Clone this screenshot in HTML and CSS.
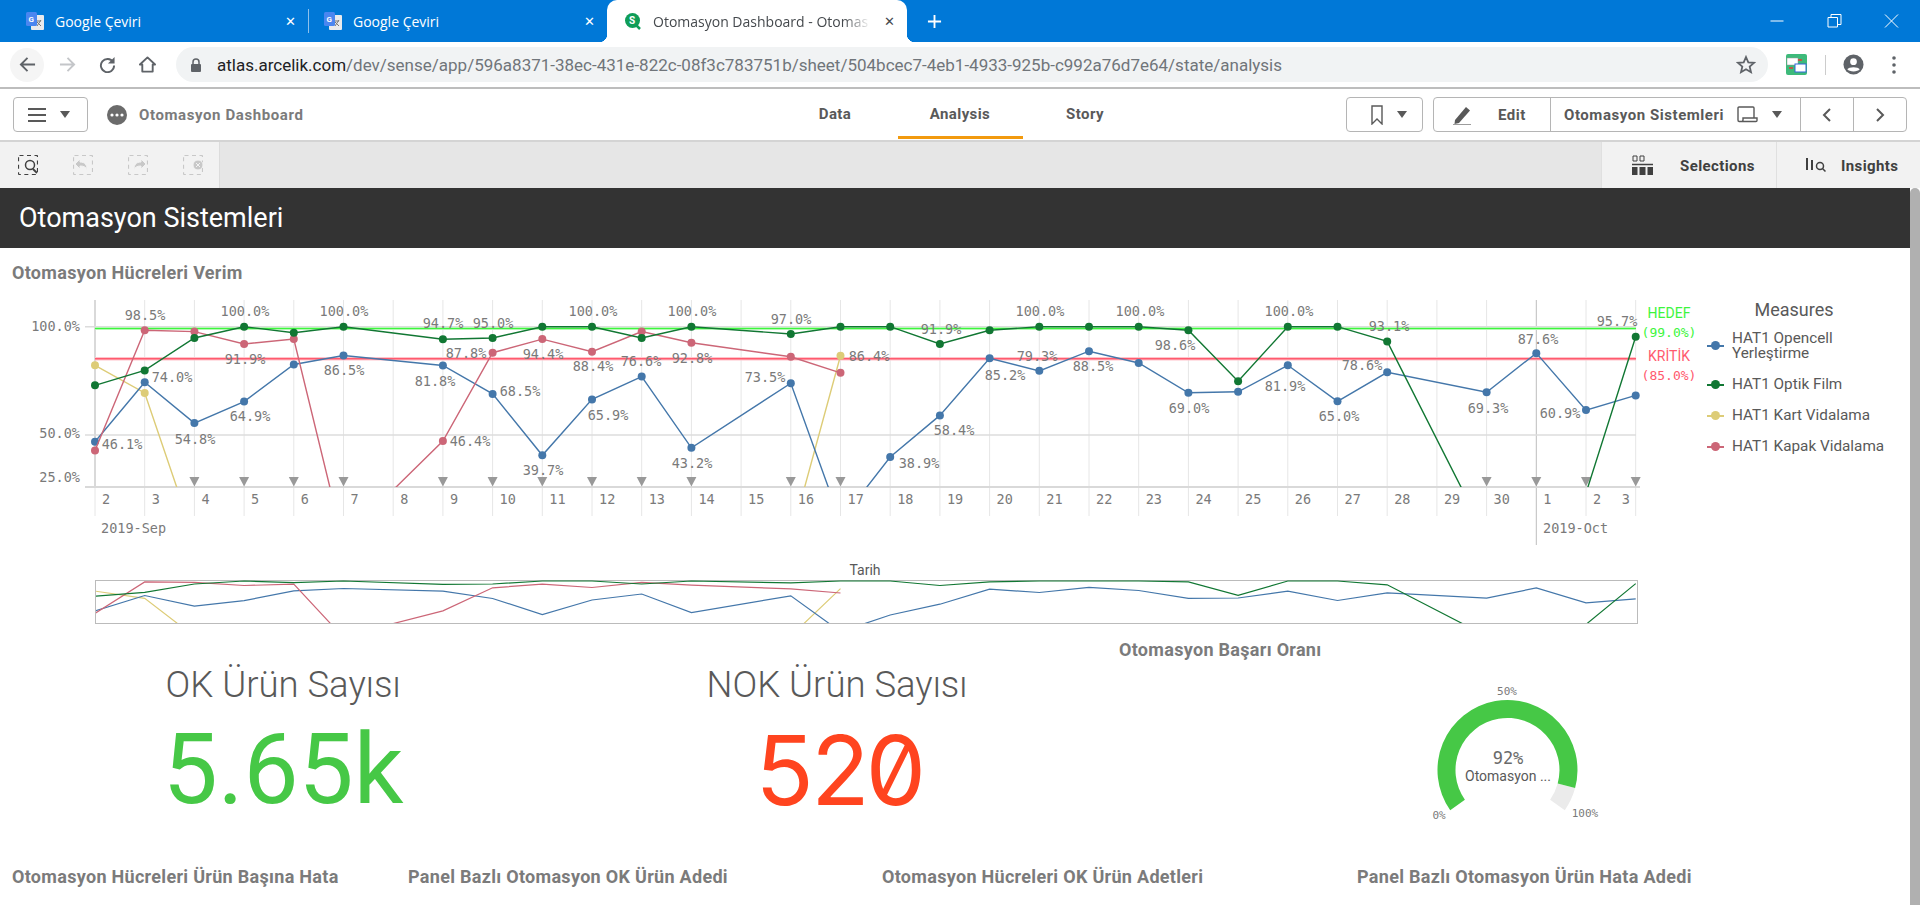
FILE: index.html
```html
<!DOCTYPE html>
<html lang="en">
<head>
    <meta charset="UTF-8">
    <title>Otomasyon Dashboard - Otomasyon Sistemleri</title>
    <link rel="stylesheet" href="styles.css">
</head>
<body>
    <!-- browser chrome -->
    <div class="tab-strip">
        <div class="tab">
            <svg class="favicon" viewBox="0 0 18 18"><rect x="5" y="3" width="13" height="15" rx="1" fill="#e8eaed"/><path d="M10 9l5 5M15 8l-4 6M10 9h5" stroke="#777" fill="none"/><rect x="0" y="0" width="11" height="14" rx="1.5" fill="#4a86f0"/><text x="2.5" y="9.5" class="favicon-g">G</text></svg>
            <span class="tab-title">Google Çeviri</span>
            <span class="tab-close">✕</span>
        </div>
        <div class="tab tab-sep">
            <svg class="favicon" viewBox="0 0 18 18"><rect x="5" y="3" width="13" height="15" rx="1" fill="#e8eaed"/><path d="M10 9l5 5M15 8l-4 6M10 9h5" stroke="#777" fill="none"/><rect x="0" y="0" width="11" height="14" rx="1.5" fill="#4a86f0"/><text x="2.5" y="9.5" class="favicon-g">G</text></svg>
            <span class="tab-title">Google Çeviri</span>
            <span class="tab-close">✕</span>
        </div>
        <div class="tab tab-active">
            <svg class="favicon" viewBox="0 0 18 18"><circle cx="8.5" cy="8.5" r="7.5" fill="#0f9d58"/><path d="M12 13l4 4" stroke="#0f9d58" stroke-width="2.5"/><text x="5" y="12" class="favicon-s">S</text></svg>
            <span class="tab-title tab-fade">Otomasyon Dashboard - Otomas</span>
            <span class="tab-close">✕</span>
        </div>
        <svg class="new-tab" viewBox="0 0 16 16"><path d="M8 1v14M1 8h14" stroke="#fff" stroke-width="2"/></svg>
        <div class="window-controls">
            <svg viewBox="0 0 14 14"><path d="M0 7h13" stroke="#fff"/></svg>
            <svg viewBox="0 0 14 14"><path d="M.5 3.500h9.500v9.500H.5zM3.500 3.500V.5h10v10H10" stroke="#fff" fill="none"/></svg>
            <svg viewBox="0 0 14 14"><path d="M.5.5l13 13M13.500.5l-13 13" stroke="#fff" fill="none"/></svg>
        </div>
    </div>

    <div class="address-row">
        <div class="nav-button nav-hover">
            <svg viewBox="0 0 18 18"><path d="M17 9H2M9 2L2 9l7 7" stroke="#5f6368" stroke-width="2" fill="none"/></svg>
        </div>
        <div class="nav-button">
            <svg viewBox="0 0 18 18"><path d="M1 9h15M9 2l7 7-7 7" stroke="#c4c6c9" stroke-width="2" fill="none"/></svg>
        </div>
        <div class="nav-button">
            <svg viewBox="0 0 18 18"><path d="M15 6.500A7 7 0 1 0 16 10" stroke="#5f6368" stroke-width="2" fill="none"/><path d="M16.500 1v7h-7z" fill="#5f6368"/></svg>
        </div>
        <div class="nav-button">
            <svg viewBox="0 0 18 18"><path d="M9 1.500L1 9h2.500v7.500h11V9H17z" stroke="#5f6368" stroke-width="2" fill="none" stroke-linejoin="round"/></svg>
        </div>
        <div class="omnibox">
            <svg class="lock" viewBox="0 0 12 14"><path d="M3 6V4a3 3 0 0 1 6 0v2" stroke="#5f6368" stroke-width="1.500" fill="none"/><rect x="1" y="6" width="10" height="8" rx="1" fill="#5f6368"/></svg>
            <span class="url"><b>atlas.arcelik.com</b>/dev/sense/app/596a8371-38ec-431e-822c-08f3c783751b/sheet/504bcec7-4eb1-4933-925b-c992a76d7e64/state/analysis</span>
            <svg class="star" viewBox="0 0 20 20"><path d="M10 2l2.300 5.300 5.700.5-4.300 3.800 1.300 5.600L10 14.200 5 17.200l1.300-5.600L2 7.800l5.700-.5z" stroke="#5f6368" stroke-width="1.800" fill="none"/></svg>
        </div>
        <svg class="extension" viewBox="0 0 21 21"><rect width="21" height="21" rx="2" fill="#3dba7a"/><rect x="1" y="4" width="11" height="7" fill="#fff" stroke="#999" stroke-width=".5"/><rect x="9" y="10" width="11" height="8" fill="#fff" stroke="#3367d6"/><path d="M12 6h4M3 14h4" stroke="#e53935" stroke-width="1.500"/></svg>
        <span class="toolbar-sep"></span>
        <svg class="account" viewBox="0 0 22 22"><circle cx="11" cy="11" r="10.500" fill="#5f6368"/><circle cx="11" cy="8" r="3.500" fill="#fff"/><path d="M4.500 16c1.500-3 11.500-3 13 0-2 3-11 3-13 0z" fill="#fff"/></svg>
        <svg class="kebab" viewBox="0 0 4 18"><circle cx="2" cy="2" r="1.800" fill="#5f6368"/><circle cx="2" cy="9" r="1.800" fill="#5f6368"/><circle cx="2" cy="16" r="1.800" fill="#5f6368"/></svg>
    </div>

    <!-- qlik toolbar -->
    <div class="app-bar">
        <div class="app-left">
            <div class="btn menu-btn">
                <svg class="hamburger" viewBox="0 0 18 16"><path d="M0 2h18M0 8h18M0 14h18" stroke="#595959" stroke-width="2.200"/></svg>
                <span class="caret"></span>
            </div>
            <svg class="app-dots" viewBox="0 0 20 20"><circle cx="10" cy="10" r="10" fill="#6b6b6b"/><circle cx="5" cy="10" r="1.600" fill="#fff"/><circle cx="10" cy="10" r="1.600" fill="#fff"/><circle cx="15" cy="10" r="1.600" fill="#fff"/></svg>
            <span class="app-title">Otomasyon Dashboard</span>
        </div>
        <div class="app-tabs">
            <span class="app-tab">Data</span>
            <span class="app-tab app-tab-active">Analysis</span>
            <span class="app-tab">Story</span>
        </div>
        <div class="app-right">
            <div class="btn bookmark-btn">
                <svg class="bookmark" viewBox="0 0 12 20"><path d="M1 1h10v18l-5-5-5 5z" stroke="#595959" stroke-width="1.400" fill="none"/></svg>
                <span class="caret"></span>
            </div>
            <div class="btn-group">
                <div class="group-item edit-item">
                    <svg class="pencil" viewBox="0 0 20 20"><path d="M3 15L14 2l4 3.500L7 18l-4.500 1z" fill="#595959"/><path d="M1 20h18" stroke="#595959" stroke-width="1.200"/></svg>
                    <span>Edit</span>
                </div>
                <div class="group-item sheet-item">
                    <span>Otomasyon Sistemleri</span>
                    <svg class="sheet-icon" viewBox="0 0 21 17"><path d="M2 15.500a1.500 1.500 0 0 1-1-1.500V2a1 1 0 0 1 1-1h14a1 1 0 0 1 1 1v10M2 15.500h17a1 1 0 0 0 1-1V12H6v2a1.500 1.500 0 0 1-1.500 1.500" stroke="#595959" stroke-width="1.400" fill="none"/></svg>
                    <span class="caret"></span>
                </div>
                <div class="group-item arrow-item">
                    <svg viewBox="0 0 10 16"><path d="M8 2L2 8l6 6" stroke="#595959" stroke-width="2" fill="none"/></svg>
                </div>
                <div class="group-item arrow-item">
                    <svg viewBox="0 0 10 16"><path d="M2 2l6 6-6 6" stroke="#595959" stroke-width="2" fill="none"/></svg>
                </div>
            </div>
        </div>
    </div>

    <div class="sub-bar">
        <div class="selection-tools">
            <svg viewBox="0 0 20 20"><rect x=".5" y=".5" width="19" height="19" rx="1" class="dash dash-on"/><circle cx="12" cy="10" r="4.500" fill="#f2f2f2" stroke="#404040" stroke-width="1.500"/><path d="M15 14l4 4" stroke="#404040" stroke-width="1.800"/></svg>
            <svg viewBox="0 0 20 20"><rect x=".5" y=".5" width="19" height="19" rx="1" class="dash"/><path d="M2 9l5-5v3c5 0 7 3 7 8-1-3-3-4-7-4v3z" fill="#c8c8c8" stroke="#f2f2f2"/></svg>
            <svg viewBox="0 0 20 20"><rect x=".5" y=".5" width="19" height="19" rx="1" class="dash"/><path d="M18 9l-5-5v3c-5 0-7 3-7 8 1-3 3-4 7-4v3z" fill="#c8c8c8" stroke="#f2f2f2"/></svg>
            <svg viewBox="0 0 20 20"><rect x=".5" y=".5" width="19" height="19" rx="1" class="dash"/><circle cx="15" cy="10" r="5" fill="#c8c8c8" stroke="#f2f2f2"/><path d="M13 8l4 4M17 8l-4 4" stroke="#f2f2f2"/></svg>
        </div>
        <div class="side-tools">
            <div class="side-tool selections-tool">
                <svg viewBox="0 0 21 20"><path d="M1 1h4v5H1zM8 1h4v5H8z" stroke="#404040" fill="none"/><path d="M0 9.500h21" stroke="#404040" stroke-width="1.500"/><path d="M0 12h5.500v8H0zM7.500 12h6v8h-6zM15.500 12H21v8h-5.500z" fill="#404040"/></svg>
                <span>Selections</span>
            </div>
            <div class="side-tool insights-tool">
                <svg viewBox="0 0 21 16"><path d="M1 1v12M6 3v10" stroke="#404040" stroke-width="2"/><circle cx="14" cy="9" r="3.500" stroke="#404040" stroke-width="1.500" fill="none"/><path d="M16.500 11.500l3 3" stroke="#404040" stroke-width="1.500"/></svg>
                <span>Insights</span>
            </div>
        </div>
    </div>

    <div class="sheet-wrap">
        <main class="sheet">
            <h1 class="sheet-title">Otomasyon Sistemleri</h1>

            <h2 class="object-title verim-title">Otomasyon Hücreleri Verim</h2>
            <div class="chart-row">
                <svg id="lineChart" class="line-chart" viewBox="0 290 1700 350"></svg>
                <div class="legend">
                    <div class="legend-head">Measures</div>
                    <div class="legend-item"><span class="marker marker-blue"></span><span>HAT1 Opencell<br>Yerleştirme</span></div>
                    <div class="legend-item"><span class="marker marker-green"></span><span>HAT1 Optik Film</span></div>
                    <div class="legend-item"><span class="marker marker-yellow"></span><span>HAT1 Kart Vidalama</span></div>
                    <div class="legend-item"><span class="marker marker-pink"></span><span>HAT1 Kapak Vidalama</span></div>
                </div>
            </div>

            <div class="kpi-row">
                <div class="kpi kpi-ok">
                    <div class="kpi-label">OK Ürün Sayısı</div>
                    <div class="kpi-value value-ok">5.65k</div>
                </div>
                <div class="kpi kpi-nok">
                    <div class="kpi-label">NOK Ürün Sayısı</div>
                    <div class="kpi-value value-nok">520</div>
                </div>
                <div class="gauge-box">
                    <h2 class="object-title gauge-title">Otomasyon Başarı Oranı</h2>
                    <svg id="gauge" class="gauge" viewBox="1108 670 802 170"></svg>
                </div>
            </div>

            <div class="bottom-titles">
                <h2 class="object-title">Otomasyon Hücreleri Ürün Başına Hata</h2>
                <h2 class="object-title">Panel Bazlı Otomasyon OK Ürün Adedi</h2>
                <h2 class="object-title">Otomasyon Hücreleri OK Ürün Adetleri</h2>
                <h2 class="object-title">Panel Bazlı Otomasyon Ürün Hata Adedi</h2>
            </div>
        </main>
        <div class="scrollbar"></div>
    </div>

    <script src="chart.js"></script>
</body>
</html>
```

FILE: styles.css
```css
:root {
    --chrome-blue: #0078d7;
    --qlik-text: #595959;
    --title-grey: #7b7b7b;
    --border: #b5b5b5;
    --ok-green: #46c846;
    --nok-red: #ff441f;
}

* {
    box-sizing: border-box;
}

html, body {
    height: 905px;
    margin: 0;
    overflow: hidden;
}

body {
    font-family: Roboto, sans-serif;
    background: #fff;
    color: var(--qlik-text);
}

/* browser chrome */
.tab-strip {
    display: flex;
    align-items: center;
    height: 42px;
    padding-left: 8px;
    background: var(--chrome-blue);
}

.tab {
    display: flex;
    align-items: center;
    width: 300px;
    height: 42px;
    padding: 0 12px 0 18px;
    color: #fff;
    font-family: "Open Sans", sans-serif;
    font-size: 14px;
}

.tab-sep {
    width: 299px;
    padding-left: 16px;
    background: linear-gradient(#8dc1ec, #8dc1ec) left center / 1px 24px no-repeat;
}

.tab-active {
    position: relative;
    height: 42px;
    background: #fff;
    color: #45494d;
    border-radius: 10px 10px 0 0;
    padding-left: 17px;
}

.tab-active::before, .tab-active::after {
    content: "";
    position: absolute;
    bottom: 0;
    width: 8px;
    height: 8px;
}

.tab-active::before {
    left: -8px;
    background: radial-gradient(circle at 0 0, var(--chrome-blue) 8px, #fff 8.500px);
}

.tab-active::after {
    right: -8px;
    background: radial-gradient(circle at 100% 0, var(--chrome-blue) 8px, #fff 8.500px);
}

.favicon {
    width: 18px;
    height: 18px;
    flex: none;
    margin-right: 11px;
}

.favicon-g {
    font: bold 8px Roboto, sans-serif;
    fill: #fff;
}

.favicon-s {
    font: bold 10px Roboto, sans-serif;
    fill: #fff;
}

.tab-title {
    flex: 1;
    white-space: nowrap;
}

.tab-fade {
    -webkit-mask-image: linear-gradient(to right, #000 190px, transparent 218px);
}

.tab-close {
    flex: none;
    width: 12px;
    font-size: 13px;
    text-align: center;
}

.new-tab {
    width: 15px;
    height: 15px;
    margin-left: 20px;
}

.window-controls {
    display: flex;
    margin-left: auto;
}

.window-controls svg {
    width: 57px;
    height: 14px;
}

.address-row {
    display: flex;
    align-items: center;
    height: 47px;
    padding-left: 10px;
    border-bottom: 2px solid #bdbdbd;
}

.nav-button {
    display: flex;
    align-items: center;
    justify-content: center;
    width: 34px;
    height: 34px;
    margin-right: 6px;
    border-radius: 50%;
}

.nav-button svg {
    width: 17px;
    height: 17px;
}

.nav-hover {
    background: #f5f5f5;
}

.omnibox {
    display: flex;
    align-items: center;
    width: 1592px;
    height: 35px;
    margin-left: 6px;
    padding-left: 14px;
    background: #f1f3f4;
    border-radius: 18px;
}

.lock {
    width: 12px;
    height: 14px;
    margin-right: 15px;
}

.url {
    flex: 1;
    font-size: 17px;
    color: #70757a;
    white-space: nowrap;
}

.url b {
    font-weight: 400;
    color: #202124;
}

.star {
    width: 20px;
    height: 20px;
    margin-right: 12px;
}

.extension {
    width: 21px;
    height: 21px;
    margin-left: 18px;
}

.toolbar-sep {
    width: 1px;
    height: 20px;
    margin: 0 17px 0 18px;
    background: #ccc;
}

.account {
    width: 21px;
    height: 21px;
}

.kebab {
    width: 4px;
    height: 18px;
    margin-left: 28px;
}

/* qlik toolbar */
.app-bar {
    display: grid;
    grid-template-columns: 1fr auto 1fr;
    height: 53px;
    border-bottom: 2px solid #d4d4d4;
}

.app-left, .app-right {
    display: flex;
    align-items: center;
}

.app-left {
    padding-left: 13px;
}

.app-right {
    justify-content: flex-end;
    padding-right: 13px;
}

.btn, .btn-group {
    display: flex;
    align-items: center;
    height: 35px;
    background: #fff;
    border: 1px solid var(--border);
    border-radius: 4px;
}

.menu-btn {
    width: 75px;
    padding-left: 14px;
}

.hamburger {
    width: 18px;
    height: 16px;
    margin-right: 14px;
}

.caret {
    width: 0;
    height: 0;
    border-left: 5.500px solid transparent;
    border-right: 5.500px solid transparent;
    border-top: 7px solid var(--qlik-text);
}

.app-dots {
    width: 20px;
    height: 20px;
    margin-left: 19px;
}

.app-title {
    margin-left: 12px;
    color: var(--title-grey);
    font-size: 15px;
    font-weight: 700;
    letter-spacing: .6px;
}

.app-tabs {
    display: flex;
}

.app-tab {
    width: 125px;
    height: 50px;
    padding-top: 16px;
    text-align: center;
    font-size: 15px;
    font-weight: 700;
    letter-spacing: .4px;
}

.app-tab-active {
    border-bottom: 3px solid #f29a0e;
}

.bookmark-btn {
    width: 77px;
    margin-right: 10px;
    padding-left: 24px;
}

.bookmark {
    width: 12px;
    height: 20px;
    margin-right: 14px;
}

.btn-group {
    width: 474px;
}

.group-item {
    display: flex;
    align-items: center;
    height: 100%;
    font-size: 15px;
    font-weight: 700;
    letter-spacing: .55px;
    border-left: 1px solid var(--border);
}

.group-item:first-child {
    border-left: 0;
}

.edit-item {
    width: 116px;
    padding-left: 18px;
}

.pencil {
    width: 20px;
    height: 20px;
    margin-right: 26px;
}

.sheet-item {
    width: 250px;
    padding-left: 13px;
}

.sheet-icon {
    width: 21px;
    height: 17px;
    margin: 0 14px 0 13px;
}

.arrow-item {
    flex: 1;
    justify-content: center;
}

.arrow-item svg {
    width: 10px;
    height: 16px;
}

.sub-bar {
    display: flex;
    justify-content: space-between;
    height: 46px;
    background: #e6e6e6;
}

.selection-tools {
    display: flex;
    align-items: center;
    gap: 35px;
    width: 220px;
    padding-left: 18px;
    background: #f2f2f2;
    border-right: 1px solid #dcdcdc;
}

.selection-tools svg {
    width: 20px;
    height: 20px;
}

.dash {
    fill: none;
    stroke: #c8c8c8;
    stroke-width: 1.200;
    stroke-dasharray: 4 3.500;
}

.dash-on {
    stroke: #404040;
}

.side-tools {
    display: flex;
}

.side-tool {
    display: flex;
    align-items: center;
    background: #f2f2f2;
    border-left: 1px solid #e0e0e0;
    color: #404040;
    font-size: 15px;
    font-weight: 700;
    letter-spacing: .4px;
}

.side-tool span {
    padding-top: 2px;
}

.selections-tool {
    width: 175px;
    padding-left: 30px;
}

.selections-tool svg {
    width: 21px;
    height: 20px;
    margin-right: 27px;
}

.insights-tool {
    width: 144px;
    padding-left: 29px;
}

.insights-tool svg {
    width: 21px;
    height: 16px;
    margin-right: 14px;
}

/* sheet */
.sheet-wrap {
    display: flex;
    height: 717px;
}

.sheet {
    width: 1910px;
    overflow: hidden;
}

.scrollbar {
    width: 10px;
    background: #b0b0b0;
    border-radius: 5px 5px 0 0;
}

.sheet-title {
    height: 60px;
    margin: 0;
    padding: 0 19px;
    background: #333;
    color: #fff;
    font-size: 27px;
    font-weight: 400;
    line-height: 60px;
}

.object-title {
    margin: 0;
    color: var(--title-grey);
    font-size: 18px;
    font-weight: 700;
    letter-spacing: .3px;
    line-height: 20px;
    white-space: nowrap;
}

.verim-title {
    height: 42px;
    padding: 15px 0 0 12px;
}

.chart-row {
    display: flex;
    height: 350px;
}

.line-chart {
    width: 1700px;
    height: 350px;
    flex: none;
}

.axis-text {
    font-family: "DejaVu Sans Mono", monospace;
    font-size: 13.500px;
    fill: #7a7a7a;
}

.side-label {
    font-size: 13px;
}

.small-text {
    font-family: "DejaVu Sans Mono", monospace;
    font-size: 11px;
    fill: #7a7a7a;
}

.tarih {
    font-family: Roboto, sans-serif;
    font-size: 14px;
    fill: #595959;
}

.legend {
    width: 188px;
    padding-top: 8px;
    font-size: 15.300px;
    line-height: 15px;
}

.legend-head {
    margin-bottom: 9px;
    color: #595959;
    font-size: 18px;
    line-height: 24px;
    text-align: center;
}

.legend-item {
    display: flex;
    align-items: center;
    gap: 8px;
    margin-bottom: 16px;
    padding-left: 7px;
    white-space: nowrap;
}

.marker {
    position: relative;
    flex: none;
    width: 17px;
    height: 2px;
    background: currentColor;
}

.marker::after {
    content: "";
    position: absolute;
    left: 4px;
    top: -4px;
    width: 9px;
    height: 9px;
    border-radius: 50%;
    background: currentColor;
}

.marker-blue { color: #4477aa; }
.marker-green { color: #117733; }
.marker-yellow { color: #ddcc77; }
.marker-pink { color: #cc6677; }

.kpi-row {
    display: grid;
    grid-template-columns: 566px 542px 1fr;
    height: 224px;
}

.kpi {
    padding-top: 25px;
    text-align: center;
}

.kpi-label {
    font-size: 36.500px;
    font-weight: 300;
    line-height: 40px;
    color: #595959;
}

.kpi-value {
    margin-top: 16px;
    font-size: 98px;
    line-height: 98px;
}

.value-ok {
    color: var(--ok-green);
}

.value-nok {
    color: var(--nok-red);
    font-family: Inter, sans-serif;
    font-size: 96px;
    font-weight: 400;
    letter-spacing: -7px;
    font-variant-numeric: slashed-zero tabular-nums;
}

.gauge-title {
    padding-left: 11px;
}

.gauge {
    display: block;
    width: 802px;
    height: 170px;
    margin-top: 10px;
}

.gauge-big {
    font-family: "DejaVu Sans Mono", monospace;
    font-size: 17px;
    fill: #6a6a6a;
    text-anchor: middle;
}

.gauge-sub {
    font-size: 14px;
    fill: #595959;
    text-anchor: middle;
}

.bottom-titles {
    display: grid;
    grid-template-columns: 396px 474px 475px 1fr;
    padding: 3px 0 0 12px;
}
```

FILE: chart.js
```js
const SVG_NS = 'http://www.w3.org/2000/svg';

// x of each day, first point is 2 Sep
const X0 = 95;
const STEP = 49.7;
const xAt = i => X0 + STEP * i;
const yAt = v => 326.7 + (100 - v) * 2.133;
const miniY = v => 581 + (100 - v) * 0.557;

const n = null;
const series = [
    { color: '#ddcc77', values: [81.9, 68.9, 0.4, n, n, n, n, n, n, n, n, n, n, n, 1, 86.4] },
    { color: '#4477aa', values: [46.1, 74, 54.8, 64.9, 82.3, 86.5, n, 81.8, 68.5, 39.7, 65.9, 76.6, 43.2, n, 73.5, 8.9, 38.9, 58.4, 85.2, 79.3, 88.5, 83, 69, 69.5, 81.9, 65, 78.6, n, 69.3, 87.6, 60.9, 67.8] },
    { color: '#cc6677', values: [42, 98.3, 97.7, 91.9, 94.2, -1.4, 23.5, 46.4, 87.8, 94.2, 88.3, 97.7, 92.5, n, 85.9, 78.4] },
    { color: '#117733', values: [72.5, 79.5, 94.7, 100, 97.2, 100, n, 94.1, 94.7, 100, 100, 94.7, 100, n, 96.6, 100, 100, 91.9, 98.3, 100, 100, 100, 98.3, 74.4, 100, 100, 93.1, n, n, -44.8, 22, 95.3] }
];

const pointLabels = [
    ['98.5%', 145, 315], ['100.0%', 245, 311], ['100.0%', 344, 311], ['74.0%', 172, 377],
    ['46.1%', 122, 444], ['54.8%', 195, 439], ['64.9%', 250, 416], ['91.9%', 245, 359],
    ['86.5%', 344, 370], ['81.8%', 435, 381], ['94.7%', 443, 323], ['95.0%', 493, 323],
    ['87.8%', 466, 353], ['68.5%', 520, 391], ['46.4%', 470, 441], ['94.4%', 543, 354],
    ['39.7%', 543, 470], ['88.4%', 593, 366], ['65.9%', 608, 415], ['100.0%', 593, 311],
    ['76.6%', 641, 361], ['100.0%', 692, 311], ['92.8%', 692, 358], ['43.2%', 692, 463],
    ['97.0%', 791, 319], ['73.5%', 765, 377], ['86.4%', 869, 356], ['38.9%', 919, 463],
    ['91.9%', 941, 329], ['58.4%', 954, 430], ['79.3%', 1037, 356], ['85.2%', 1005, 375],
    ['88.5%', 1093, 366], ['100.0%', 1040, 311], ['100.0%', 1140, 311], ['98.6%', 1175, 345],
    ['69.0%', 1189, 408], ['100.0%', 1289, 311], ['81.9%', 1285, 386], ['65.0%', 1339, 416],
    ['78.6%', 1362, 365], ['93.1%', 1389, 326], ['69.3%', 1488, 408], ['87.6%', 1538, 339],
    ['60.9%', 1560, 413], ['95.7%', 1617, 321]
];

const markedDays = [2, 3, 4, 5, 7, 8, 9, 10, 11, 12, 14, 15, 28, 29, 30, 31];
const dayNames = [2, 3, 4, 5, 6, 7, 8, 9, 10, 11, 12, 13, 14, 15, 16, 17, 18, 19, 20, 21, 22, 23, 24, 25, 26, 27, 28, 29, 30, 1, 2, 3];

function el(parent, name, attrs, text) {
    const node = document.createElementNS(SVG_NS, name);
    for (const key in attrs) {
        node.setAttribute(key, attrs[key]);
    }
    if (text !== undefined) {
        node.textContent = text;
    }
    parent.appendChild(node);
    return node;
}

function line(parent, x1, y1, x2, y2, stroke, width) {
    return el(parent, 'line', { x1, y1, x2, y2, stroke, 'stroke-width': width });
}

function label(parent, text, x, y, anchor, fill) {
    const attrs = { x, y: y + 4.5, class: 'axis-text', 'text-anchor': anchor || 'middle' };
    if (fill) {
        attrs.class = 'axis-text side-label';
        attrs.style = 'fill:' + fill;
    }
    return el(parent, 'text', attrs, text);
}

function pathFor(values, yFn) {
    let d = '';
    values.forEach((v, i) => {
        if (v !== null) {
            d += (d ? 'L' : 'M') + xAt(i).toFixed(1) + ' ' + yFn(v).toFixed(1);
        }
    });
    return d;
}

function drawChart() {
    const svg = document.getElementById('lineChart');

    const defs = el(svg, 'defs', {});
    el(el(defs, 'clipPath', { id: 'plotClip' }), 'rect', { x: 88, y: 300, width: 1556, height: 187 });
    el(el(defs, 'clipPath', { id: 'miniClip' }), 'rect', { x: 96, y: 580, width: 1542, height: 43 });

    // grid
    for (let i = 0; i < 32; i++) {
        const monthStart = i === 29;
        line(svg, xAt(i), 300, xAt(i), monthStart ? 545 : 516, monthStart ? '#bdbdbd' : '#e6e6e6', 1);
    }
    line(svg, 95, 300, 95, 487, '#c8c8c8', 1.2);
    line(svg, 85, 326.7, 1636, 326.7, '#dcdcdc', 1.5);
    line(svg, 85, 435, 1636, 435, '#dcdcdc', 1.5);
    line(svg, 85, 487, 1640, 487, '#d9d9d9', 2);

    // reference lines
    line(svg, 95, 328.5, 1636, 328.5, '#dcf9dc', 3);
    line(svg, 95, 328.5, 1636, 328.5, '#3df53d', 1.6);
    line(svg, 95, 358.7, 1636, 358.7, '#ffc4cb', 3.5);
    line(svg, 95, 358.7, 1636, 358.7, '#ff5a6e', 1.5);

    markedDays.forEach(i => {
        const x = xAt(i);
        el(svg, 'path', { d: `M${x - 5} 477h10l-5 9.500z`, fill: '#999' });
    });

    const plot = el(svg, 'g', { 'clip-path': 'url(#plotClip)' });
    series.forEach(s => {
        el(plot, 'path', { d: pathFor(s.values, yAt), fill: 'none', stroke: s.color, 'stroke-width': 1.4 });
        s.values.forEach((v, i) => {
            if (v !== null && v > 25) {
                el(plot, 'circle', { cx: xAt(i), cy: yAt(v), r: 4, fill: s.color });
            }
        });
    });

    pointLabels.forEach(p => label(svg, p[0], p[1], p[2]));

    // axes
    label(svg, '100.0%', 80, 326, 'end');
    label(svg, '50.0%', 80, 433, 'end');
    label(svg, '25.0%', 80, 477, 'end');

    dayNames.forEach((d, i) => {
        label(svg, d, i === 31 ? xAt(i) - 14 : xAt(i) + 7, 499, 'start');
    });
    label(svg, '2019-Sep', 101, 528, 'start');
    label(svg, '2019-Oct', 1543, 528, 'start');

    // HEDEF / KRITIK
    el(svg, 'text', { x: 1669, y: 318, class: 'tarih', 'text-anchor': 'middle', style: 'fill:#3df53d' }, 'HEDEF');
    label(svg, '(99.0%)', 1669, 332, 'middle', '#3df53d');
    el(svg, 'text', { x: 1669, y: 361, class: 'tarih', 'text-anchor': 'middle', style: 'fill:#ff5a6e' }, 'KRİTİK');
    label(svg, '(85.0%)', 1669, 375, 'middle', '#ff5a6e');

    // range selector below
    el(svg, 'text', { x: 865, y: 575, class: 'tarih', 'text-anchor': 'middle' }, 'Tarih');
    el(svg, 'rect', { x: 95.5, y: 580.5, width: 1542, height: 43, fill: 'none', stroke: '#bbb' });
    const mini = el(svg, 'g', { 'clip-path': 'url(#miniClip)' });
    series.forEach(s => {
        el(mini, 'path', { d: pathFor(s.values, miniY), fill: 'none', stroke: s.color, 'stroke-width': 1.2 });
    });
}

// angle in degrees, clockwise from straight up
function gaugePoint(cx, cy, r, a) {
    const rad = a * Math.PI / 180;
    return (cx + r * Math.sin(rad)).toFixed(1) + ' ' + (cy - r * Math.cos(rad)).toFixed(1);
}

function arcPath(cx, cy, r0, r1, a0, a1) {
    const large = a1 - a0 > 180 ? 1 : 0;
    return `M${gaugePoint(cx, cy, r1, a0)}A${r1} ${r1} 0 ${large} 1 ${gaugePoint(cx, cy, r1, a1)}` +
        `L${gaugePoint(cx, cy, r0, a1)}A${r0} ${r0} 0 ${large} 0 ${gaugePoint(cx, cy, r0, a0)}Z`;
}

function drawGauge() {
    const svg = document.getElementById('gauge');
    const cx = 1507.5;
    const cy = 770;
    const end = -125 + 250 * 0.92;
    el(svg, 'path', { d: arcPath(cx, cy, 52, 70, end, 125), fill: '#ebebeb' });
    el(svg, 'path', { d: arcPath(cx, cy, 52, 70, -125, end), fill: '#46c846' });

    el(svg, 'text', { x: 1507, y: 695, class: 'small-text', 'text-anchor': 'middle' }, '50%');
    el(svg, 'text', { x: 1439, y: 819, class: 'small-text', 'text-anchor': 'middle' }, '0%');
    el(svg, 'text', { x: 1585, y: 817, class: 'small-text', 'text-anchor': 'middle' }, '100%');
    el(svg, 'text', { x: 1508, y: 764, class: 'gauge-big' }, '92%');
    el(svg, 'text', { x: 1508, y: 781, class: 'gauge-sub' }, 'Otomasyon ...');
}

drawChart();
drawGauge();
```
